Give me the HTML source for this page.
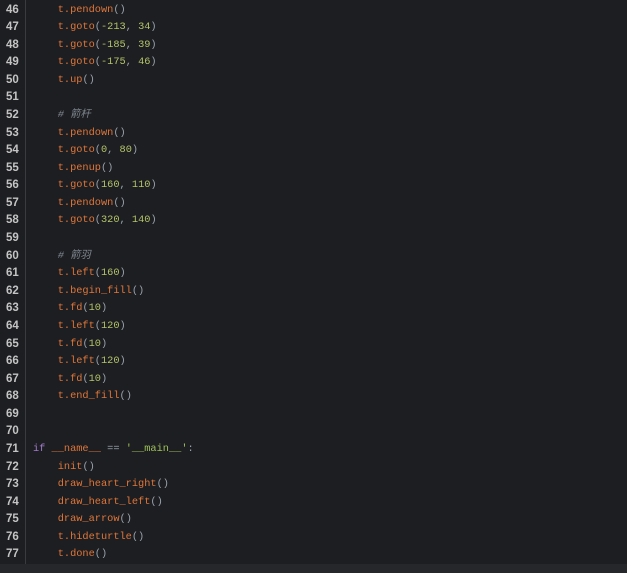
<!DOCTYPE html>
<html><head><meta charset="utf-8"><style>
html,body{margin:0;padding:0;width:627px;height:573px;overflow:hidden;background:#1e1f22;}
#w{position:absolute;left:0;top:0;width:627px;height:564px;background:#1d1e21;}
#bot{position:absolute;left:0;top:564px;width:627px;height:9px;background:#26272a;}
#g{position:absolute;left:25px;top:0;width:1px;height:564px;background:#3a3b3e;}
#t{position:absolute;left:0;top:1.5px;}
.l{position:absolute;left:0;height:17.58px;line-height:17.58px;font-family:"Liberation Mono","Noto Sans CJK SC",monospace;font-size:10.3px;white-space:pre;color:#e0763a;}
.n{position:absolute;left:6px;width:16px;text-align:left;color:#c4c4c4;font-family:"Liberation Sans",sans-serif;font-size:11.5px;font-weight:bold;}
.c{position:absolute;left:33px;}
.p{color:#9aa3ad}.d{color:#b3c46a}.m{color:#7f8790;font-style:italic}.k{color:#a37acc}.s{color:#9fc15a}.o{color:#9aa3ad}
</style></head><body>
<div id="w"></div><div id="bot"></div><div id="g"></div>
<div id="t">
<div class="l" style="top:0px"><span class="n">46</span><span class="c">    t.pendown<span class="p">()</span></span></div>
<div class="l" style="top:17.58px"><span class="n">47</span><span class="c">    t.goto<span class="p">(</span><span class="d">-213</span><span class="p">, </span><span class="d">34</span><span class="p">)</span></span></div>
<div class="l" style="top:35.16px"><span class="n">48</span><span class="c">    t.goto<span class="p">(</span><span class="d">-185</span><span class="p">, </span><span class="d">39</span><span class="p">)</span></span></div>
<div class="l" style="top:52.74px"><span class="n">49</span><span class="c">    t.goto<span class="p">(</span><span class="d">-175</span><span class="p">, </span><span class="d">46</span><span class="p">)</span></span></div>
<div class="l" style="top:70.32px"><span class="n">50</span><span class="c">    t.up<span class="p">()</span></span></div>
<div class="l" style="top:87.9px"><span class="n">51</span></div>
<div class="l" style="top:105.48px"><span class="n">52</span><span class="c">    <span class="m"># 箭杆</span></span></div>
<div class="l" style="top:123.06px"><span class="n">53</span><span class="c">    t.pendown<span class="p">()</span></span></div>
<div class="l" style="top:140.64px"><span class="n">54</span><span class="c">    t.goto<span class="p">(</span><span class="d">0</span><span class="p">, </span><span class="d">80</span><span class="p">)</span></span></div>
<div class="l" style="top:158.22px"><span class="n">55</span><span class="c">    t.penup<span class="p">()</span></span></div>
<div class="l" style="top:175.8px"><span class="n">56</span><span class="c">    t.goto<span class="p">(</span><span class="d">160</span><span class="p">, </span><span class="d">110</span><span class="p">)</span></span></div>
<div class="l" style="top:193.38px"><span class="n">57</span><span class="c">    t.pendown<span class="p">()</span></span></div>
<div class="l" style="top:210.96px"><span class="n">58</span><span class="c">    t.goto<span class="p">(</span><span class="d">320</span><span class="p">, </span><span class="d">140</span><span class="p">)</span></span></div>
<div class="l" style="top:228.54px"><span class="n">59</span></div>
<div class="l" style="top:246.12px"><span class="n">60</span><span class="c">    <span class="m"># 箭羽</span></span></div>
<div class="l" style="top:263.7px"><span class="n">61</span><span class="c">    t.left<span class="p">(</span><span class="d">160</span><span class="p">)</span></span></div>
<div class="l" style="top:281.28px"><span class="n">62</span><span class="c">    t.begin_fill<span class="p">()</span></span></div>
<div class="l" style="top:298.86px"><span class="n">63</span><span class="c">    t.fd<span class="p">(</span><span class="d">10</span><span class="p">)</span></span></div>
<div class="l" style="top:316.44px"><span class="n">64</span><span class="c">    t.left<span class="p">(</span><span class="d">120</span><span class="p">)</span></span></div>
<div class="l" style="top:334.02px"><span class="n">65</span><span class="c">    t.fd<span class="p">(</span><span class="d">10</span><span class="p">)</span></span></div>
<div class="l" style="top:351.6px"><span class="n">66</span><span class="c">    t.left<span class="p">(</span><span class="d">120</span><span class="p">)</span></span></div>
<div class="l" style="top:369.18px"><span class="n">67</span><span class="c">    t.fd<span class="p">(</span><span class="d">10</span><span class="p">)</span></span></div>
<div class="l" style="top:386.76px"><span class="n">68</span><span class="c">    t.end_fill<span class="p">()</span></span></div>
<div class="l" style="top:404.34px"><span class="n">69</span></div>
<div class="l" style="top:421.92px"><span class="n">70</span></div>
<div class="l" style="top:439.5px"><span class="n">71</span><span class="c"><span class="k">if</span> __name__ <span class="o">==</span> <span class="s">'__main__'</span><span class="p">:</span></span></div>
<div class="l" style="top:457.08px"><span class="n">72</span><span class="c">    init<span class="p">()</span></span></div>
<div class="l" style="top:474.66px"><span class="n">73</span><span class="c">    draw_heart_right<span class="p">()</span></span></div>
<div class="l" style="top:492.24px"><span class="n">74</span><span class="c">    draw_heart_left<span class="p">()</span></span></div>
<div class="l" style="top:509.82px"><span class="n">75</span><span class="c">    draw_arrow<span class="p">()</span></span></div>
<div class="l" style="top:527.4px"><span class="n">76</span><span class="c">    t.hideturtle<span class="p">()</span></span></div>
<div class="l" style="top:544.98px"><span class="n">77</span><span class="c">    t.done<span class="p">()</span></span></div>
</div>
</body></html>
